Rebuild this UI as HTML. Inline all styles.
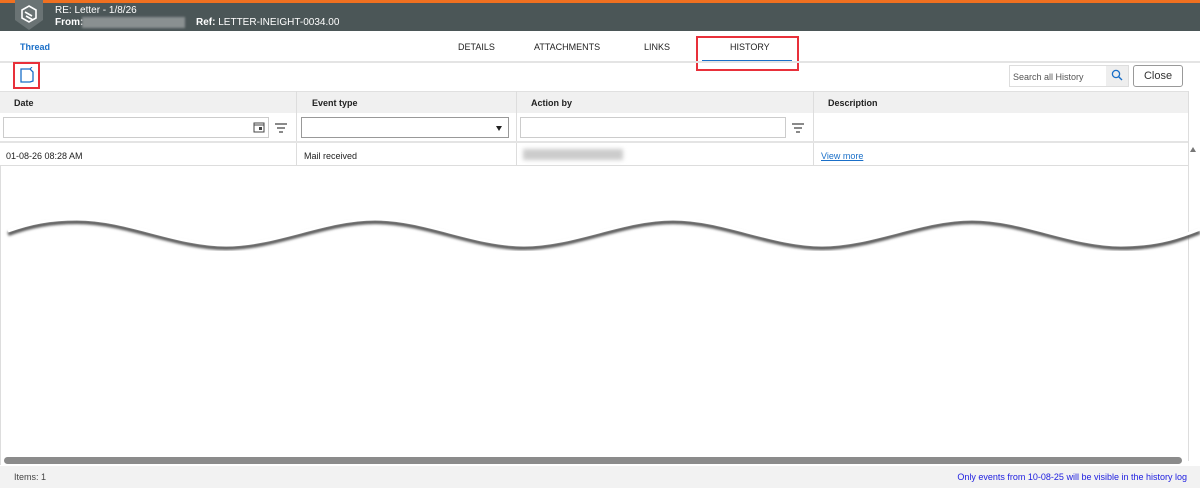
<!DOCTYPE html><html><head><style>
*{box-sizing:border-box;margin:0;padding:0}
body{width:1200px;height:488px;overflow:hidden;font-family:"Liberation Sans",sans-serif;background:#fff;position:relative;font-size:9px;color:#222}
.a{position:absolute}
</style></head><body>
<div class="a" style="left:0;top:0;width:1200px;height:3px;background:#f07020"></div>
<div class="a" style="left:0;top:3px;width:1200px;height:28px;background:#4b5657"></div>
<svg class="a" style="left:13px;top:0" width="32" height="32"><path d="M2 0H30V20L16 30L2 20Z" fill="#6a7374"/><g fill="none" stroke="#fff" stroke-width="1.6"><path d="M16 6L23 10V18L16 22L9 18V10Z"/><path d="M12 12L19 16M13 16L20 20" /></g></svg>
<div class="a" style="left:55px;top:5px;color:#fff;font-size:10px">RE: Letter - 1/8/26</div>
<div class="a" style="left:55px;top:17px;color:#fff;font-size:10px;font-weight:bold">From:</div>
<div class="a" style="left:82px;top:17px;width:103px;height:11px;background:#8a9091;filter:blur(1px)"></div>
<div class="a" style="left:196px;top:17px;color:#fff;font-size:10px"><b>Ref:</b> LETTER-INEIGHT-0034.00</div>
<div class="a" style="left:20px;top:42px;color:#1a6fc8;font-weight:bold">Thread</div>
<div class="a" style="left:458px;top:42px">DETAILS</div>
<div class="a" style="left:534px;top:42px">ATTACHMENTS</div>
<div class="a" style="left:644px;top:42px">LINKS</div>
<div class="a" style="left:730px;top:42px">HISTORY</div>
<div class="a" style="left:702px;top:60px;width:90px;height:2px;background:#1a6fc8"></div>
<div class="a" style="left:696px;top:36px;width:103px;height:35px;border:2px solid #e8303a"></div>
<div class="a" style="left:0;top:61px;width:1200px;height:2px;background:#e4e4e4"></div>
<div class="a" style="left:13px;top:62px;width:27px;height:27px;border:2px solid #e8303a"></div>
<svg class="a" style="left:19px;top:67px" width="16" height="17"><path d="M2 2H11L14 5V14L11 15H2Z" fill="none" stroke="#1a6fc8" stroke-width="1.3"/><path d="M11 2L13 0" stroke="#1a6fc8"/></svg>
<div class="a" style="left:1009px;top:65px;width:120px;height:22px;border:1px solid #ddd;background:#fff;color:#555;padding:6px 3px">Search all History</div>
<div class="a" style="left:1106px;top:66px;width:22px;height:20px;background:#eee"></div>
<svg class="a" style="left:1111px;top:69px" width="12" height="12"><circle cx="5" cy="5" r="3.6" fill="none" stroke="#1a6fc8" stroke-width="1.3"/><path d="M7.7 7.7L11 11" stroke="#1a6fc8" stroke-width="1.4"/></svg>
<div class="a" style="left:1133px;top:65px;width:50px;height:22px;border:1px solid #999;border-radius:3px;font-size:11px;text-align:center;line-height:20px;color:#333">Close</div>
<div class="a" style="left:0;top:91px;width:1188px;height:22px;background:#f0f0f0;border-top:1px solid #e0e0e0"></div>
<div class="a" style="left:14px;top:98px;font-weight:bold">Date</div>
<div class="a" style="left:312px;top:98px;font-weight:bold">Event type</div>
<div class="a" style="left:531px;top:98px;font-weight:bold">Action by</div>
<div class="a" style="left:828px;top:98px;font-weight:bold">Description</div>
<div class="a" style="left:296px;top:91px;width:1px;height:74px;background:#ddd"></div>
<div class="a" style="left:516px;top:91px;width:1px;height:74px;background:#ddd"></div>
<div class="a" style="left:813px;top:91px;width:1px;height:74px;background:#ddd"></div>
<div class="a" style="left:1188px;top:91px;width:1px;height:370px;background:#ddd"></div>
<div class="a" style="left:3px;top:117px;width:266px;height:21px;border:1px solid #ccc"></div>
<svg class="a" style="left:253px;top:121px" width="12" height="12"><rect x="1" y="2" width="10" height="9" fill="none" stroke="#444"/><rect x="6" y="6" width="3" height="3" fill="#444"/><path d="M1 4H11" stroke="#444"/></svg>
<svg class="a" style="left:275px;top:123px" width="12" height="10"><path d="M0 1H12M2 5H10M4 9H8" stroke="#444" stroke-width="1.2"/></svg>
<div class="a" style="left:301px;top:117px;width:208px;height:21px;border:1px solid #999"></div>
<div class="a" style="left:496px;top:126px;width:0;height:0;border-left:3.5px solid transparent;border-right:3.5px solid transparent;border-top:5px solid #222"></div>
<div class="a" style="left:520px;top:117px;width:266px;height:21px;border:1px solid #ccc"></div>
<svg class="a" style="left:792px;top:123px" width="12" height="10"><path d="M0 1H12M2 5H10M4 9H8" stroke="#444" stroke-width="1.2"/></svg>
<div class="a" style="left:0;top:141px;width:1188px;height:2px;background:#e4e4e4"></div>
<div class="a" style="left:6px;top:151px">01-08-26 08:28 AM</div>
<div class="a" style="left:304px;top:151px">Mail received</div>
<div class="a" style="left:523px;top:149px;width:100px;height:11px;background:#ccc;filter:blur(2px)"></div>
<div class="a" style="left:821px;top:151px;color:#1a6fc8;text-decoration:underline">View more</div>
<div class="a" style="left:0;top:165px;width:1188px;height:1px;background:#ddd"></div>
<div class="a" style="left:1190px;top:147px;width:0;height:0;border-left:3px solid transparent;border-right:3px solid transparent;border-bottom:5px solid #777"></div>
<div class="a" style="left:0;top:165px;width:1px;height:300px;background:#ddd"></div>
<svg class="a" style="left:0;top:190px" width="1200" height="80"><defs><filter id="b"><feGaussianBlur stdDeviation="1.2"/></filter></defs>
<path d="M8 44 C30 36,50 32,77 32 C127 32,176 58,226 58 C276 58,325 32,375 32 C425 32,474 58,524 58 C574 58,623 32,673 32 C723 32,772 58,822 58 C872 58,922 32,972 32 C1022 32,1071 58,1121 58 C1160 58,1185 48,1200 42" fill="none" stroke="#555" stroke-width="4" filter="url(#b)"/>
<path d="M8 41 C30 33,50 29,77 29 C127 29,176 55,226 55 C276 55,325 29,375 29 C425 29,474 55,524 55 C574 55,623 29,673 29 C723 29,772 55,822 55 C872 55,922 29,972 29 C1022 29,1071 55,1121 55 C1160 55,1185 45,1200 39" fill="none" stroke="#fff" stroke-width="3"/></svg>
<div class="a" style="left:4px;top:457px;width:1178px;height:7px;border-radius:4px;background:#8b8b8b"></div>
<div class="a" style="left:0;top:466px;width:1200px;height:22px;background:#f2f2f2"></div>
<div class="a" style="left:14px;top:472px;color:#444">Items: 1</div>
<div class="a" style="right:13px;top:472px;color:#2020e0">Only events from 10-08-25 will be visible in the history log</div>
</body></html>
